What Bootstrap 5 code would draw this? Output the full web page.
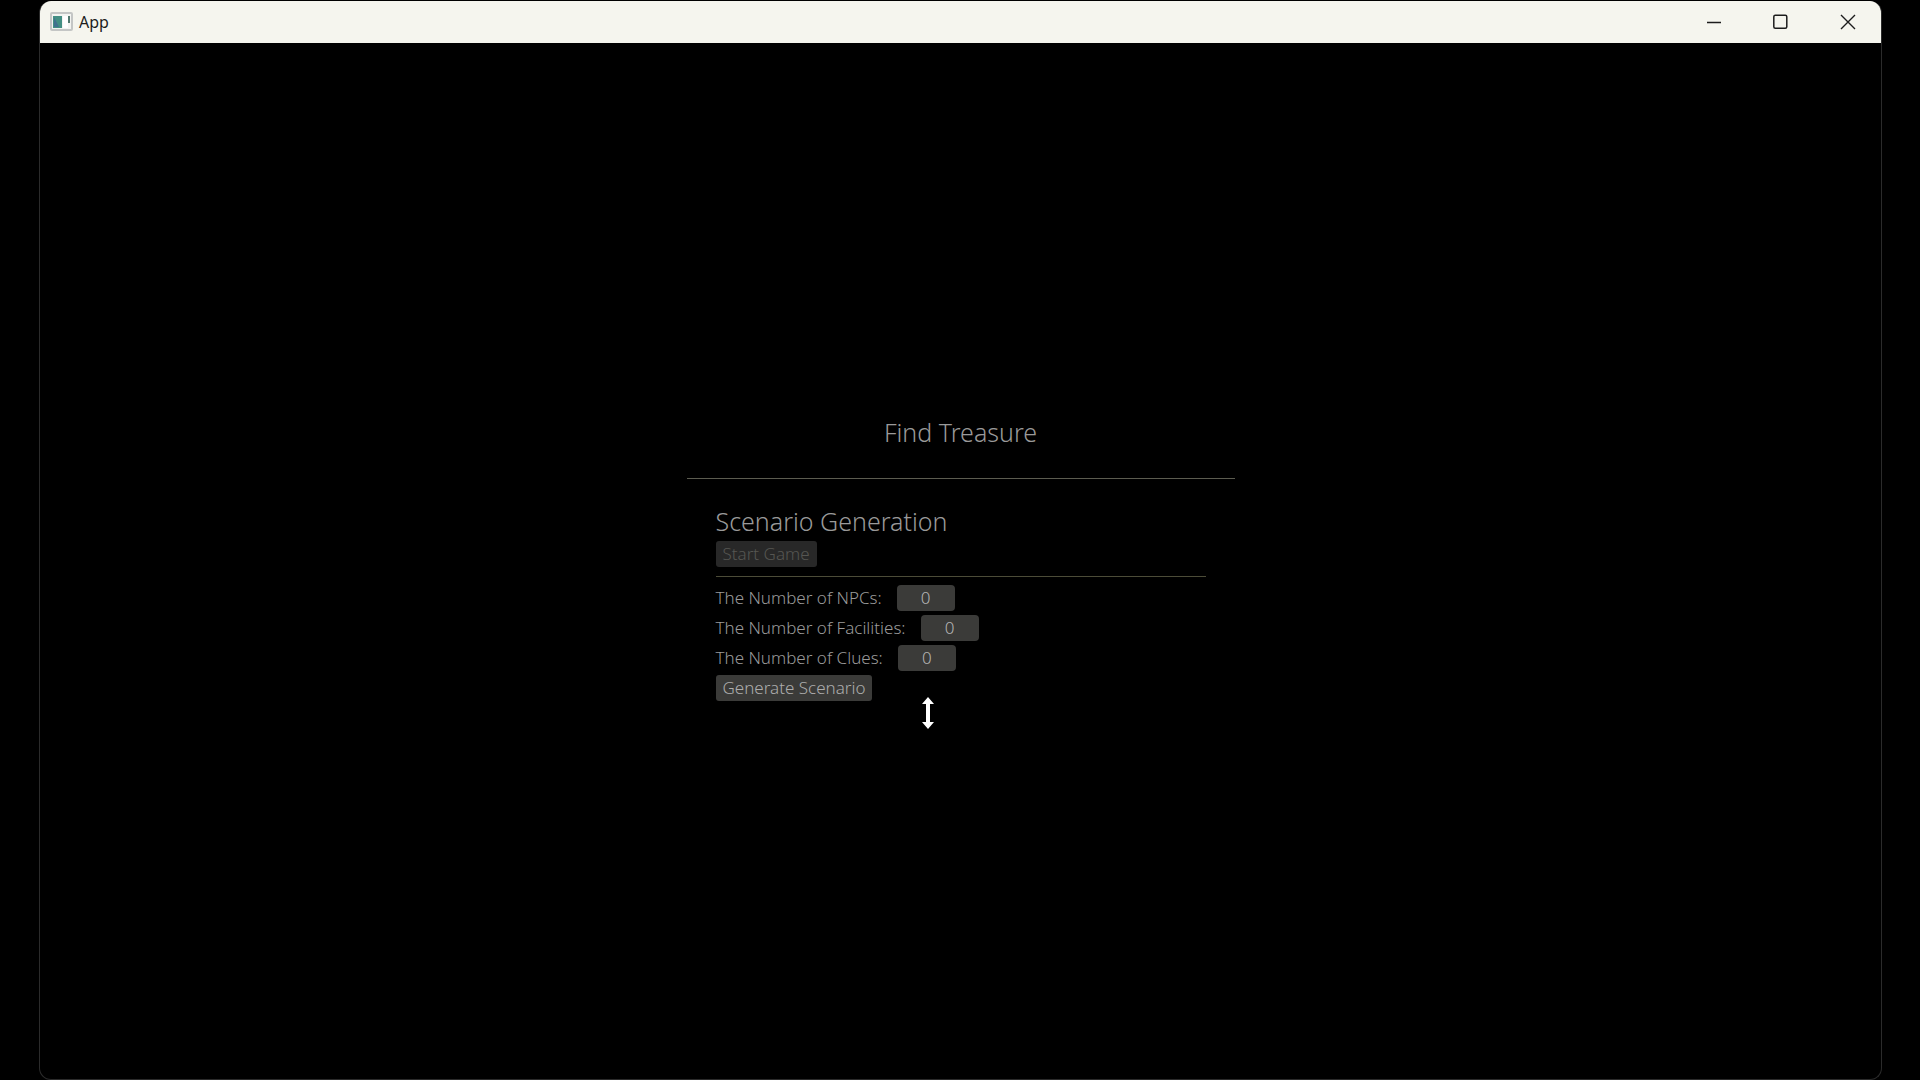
<!DOCTYPE html>
<html lang="en">
<head>
<meta charset="utf-8">
<meta name="viewport" content="width=device-width, initial-scale=1">
<title>App</title>
<link href="https://cdn.jsdelivr.net/npm/bootstrap@5.3.0/dist/css/bootstrap.min.css" rel="stylesheet">
<style>
  body { background: #000; color: #9a9a9a; font-family: "Noto Sans", "Open Sans", sans-serif; font-size: 17px; font-weight: 300; padding: 1px 38px 0 39px; }
  .app-window { border: 1px solid #2b2b2b; border-top-width: 0; border-radius: 12px; overflow: hidden; }
  .title-bar { background: #f5f5ee; color: #1c1c1c; height: 42px; padding-left: 10px; gap: 6px; font-size: 16px; font-weight: 400; }
  .win-btn { width: 67px; height: 42px; color: #1c1c1c; }
  .screen-area { padding-bottom: 1px; }
  .screen-panel { width: 548px; }
  .screen-title { font-size: 25px; line-height: 24px; font-weight: 300; margin-bottom: 34px; }
  .section-title { font-size: 25px; line-height: 32px; font-weight: 300; margin-bottom: 4px; }
  .rule { border-color: #5c5c50; opacity: 1; margin: 0; }
  .scenario { padding: 26px 29px 0; }
  .scenario .rule { margin: 9px 0 8px; border-color: #4c4c38; }
  .tool-btn { background: #3b3b39; color: #acacac; border: 0; border-radius: 3px; height: 26px; line-height: 24px; padding: 0 7px; font-weight: 300; }
  .tool-btn:disabled { background: #282828; color: #565652; }
  .form-line { height: 26px; gap: 15px; }
  .form-line label { line-height: 24px; }
  .num-box { background: #3b3b39; color: #b4b4b4; border: 0; border-radius: 4px; width: 58px; height: 26px; line-height: 26px; padding: 0; text-align: center; font-weight: 300; }
  .resize-cursor { left: 234px; top: 276px; }
</style>
<script src="https://cdn.jsdelivr.net/npm/bootstrap@5.3.0/dist/js/bootstrap.bundle.min.js"></script>
</head>
<body class="vh-100">
<div class="app-window d-flex flex-column h-100">
  <header class="title-bar d-flex align-items-center flex-shrink-0">
    <svg width="23" height="20" viewBox="0 0 23 20" aria-hidden="true">
      <rect x="1" y="1" width="21" height="17" rx="1" fill="#f3f4f1" stroke="#c4c6c5" stroke-width="2"/>
      <rect x="3" y="4" width="9" height="12" fill="#438f83"/>
      <path d="M4 15V5l5 10z" fill="#41728f"/>
      <rect x="13" y="4" width="5" height="12" fill="#fff"/>
      <path d="M19 4v7" stroke="#52786f" stroke-width="2"/>
    </svg>
    <span>App</span>
    <div class="d-flex ms-auto">
      <button type="button" class="btn win-btn rounded-0 p-0" aria-label="Minimize"><svg class="d-block mx-auto" width="16" height="16" fill="none" stroke="currentColor"><path d="M1 8.500h14" stroke-width="1.300"/></svg></button>
      <button type="button" class="btn win-btn rounded-0 p-0" aria-label="Maximize"><svg class="d-block mx-auto" width="16" height="16" fill="none" stroke="currentColor"><rect x=".8" y="1.200" width="13" height="13" rx="1.500" stroke-width="1.500"/></svg></button>
      <button type="button" class="btn win-btn rounded-0 p-0" aria-label="Close"><svg class="d-block mx-auto" width="16" height="16" fill="none" stroke="currentColor"><path d="M1 1l14 14M15 1L1 15" stroke-width="1.400"/></svg></button>
    </div>
  </header>
  <main class="screen-area flex-grow-1 d-flex align-items-center justify-content-center">
    <div class="screen-panel position-relative">
      <h1 class="screen-title text-center">Find Treasure</h1>
      <hr class="rule">
      <section class="scenario">
        <h2 class="section-title">Scenario Generation</h2>
        <button type="button" class="tool-btn d-block" disabled>Start Game</button>
        <hr class="rule">
        <form class="d-flex flex-column align-items-start gap-1">
          <div class="form-line d-flex align-items-center"><label for="npcs">The Number of NPCs:</label><input class="num-box" type="text" inputmode="numeric" id="npcs" value="0"></div>
          <div class="form-line d-flex align-items-center"><label for="facilities">The Number of Facilities:</label><input class="num-box" type="text" inputmode="numeric" id="facilities" value="0"></div>
          <div class="form-line d-flex align-items-center"><label for="clues">The Number of Clues:</label><input class="num-box" type="text" inputmode="numeric" id="clues" value="0"></div>
          <button type="button" class="tool-btn">Generate Scenario</button>
        </form>
      </section>
      <svg class="resize-cursor position-absolute" width="14" height="34" viewBox="0 0 14 34" aria-hidden="true">
        <path d="M7 1l6 7H9v18h4l-6 7-6-7h4V8H1z" fill="#fff"/>
      </svg>
    </div>
  </main>
</div>
</body>
</html>
